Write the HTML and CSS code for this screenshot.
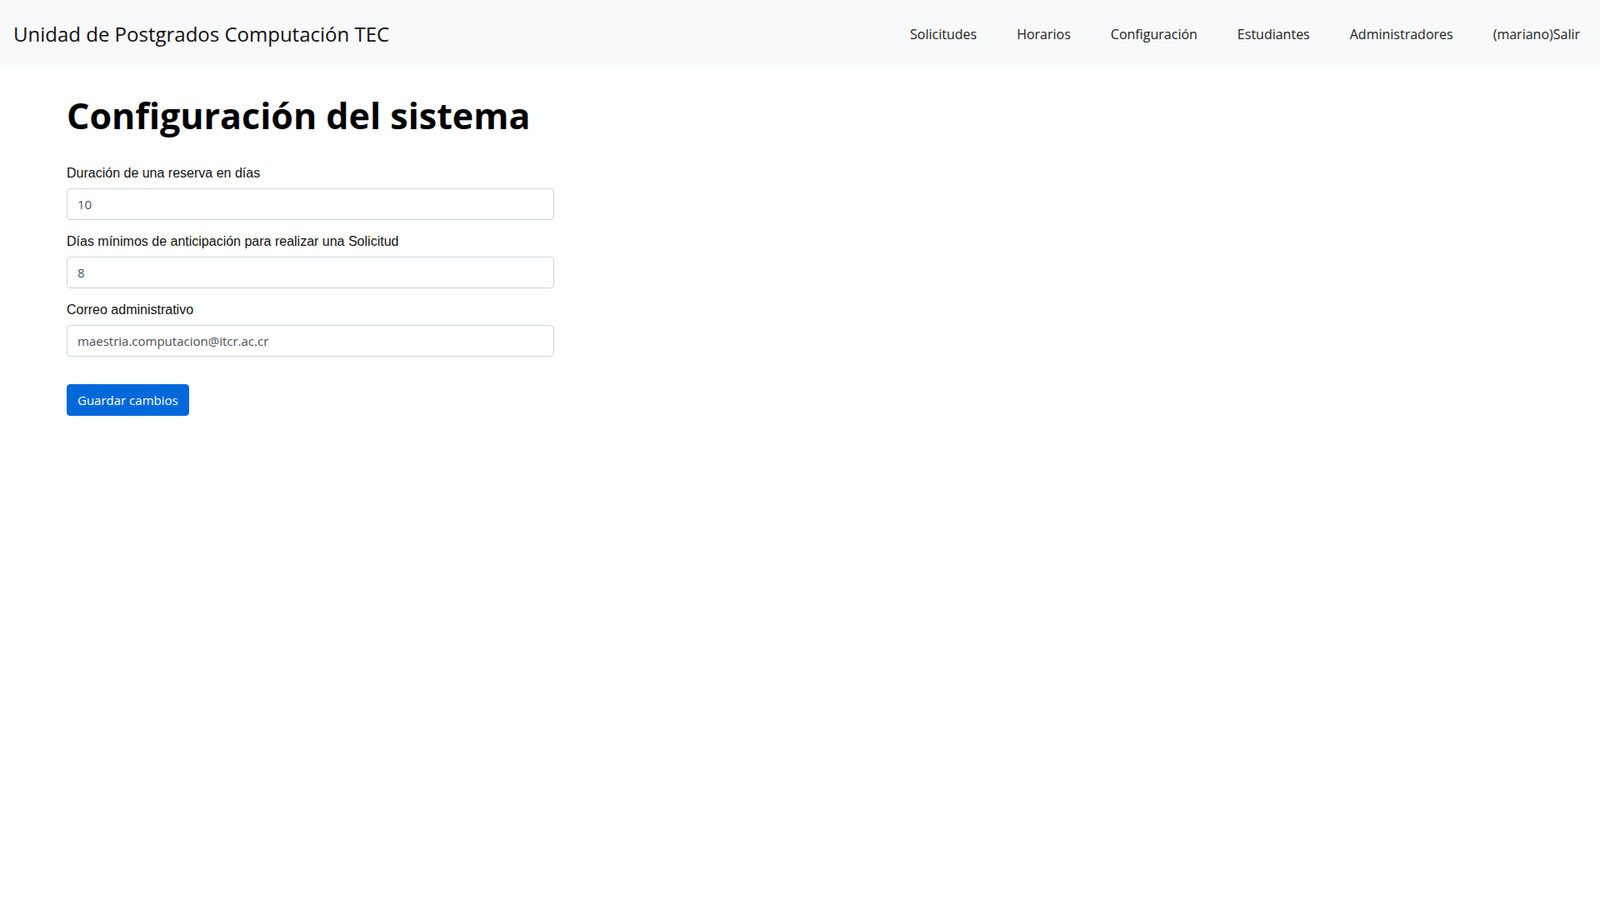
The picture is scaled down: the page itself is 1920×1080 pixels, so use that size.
FILE: index.html
```html
<!DOCTYPE html>
<html lang="es">
<head>
<meta charset="utf-8">
<title>Configuración del sistema</title>
<link rel="stylesheet" href="styles.css">
</head>
<body>
<nav class="navbar">
  <a class="brand" href="#">Unidad de Postgrados Computación TEC</a>
  <ul class="nav">
    <li><a class="nav-link" href="#">Solicitudes</a></li>
    <li><a class="nav-link" href="#">Horarios</a></li>
    <li><a class="nav-link" href="#">Configuración</a></li>
    <li><a class="nav-link" href="#">Estudiantes</a></li>
    <li><a class="nav-link" href="#">Administradores</a></li>
    <li><a class="nav-link" href="#">(mariano)Salir</a></li>
  </ul>
</nav>
<main class="page">
  <h1 class="title">Configuración del sistema</h1>
  <form class="form">
    <div class="form-group">
      <label class="label" for="dur">Duración de una reserva en días</label>
      <input class="control" id="dur" type="text" value="10">
    </div>
    <div class="form-group">
      <label class="label" for="min">Días mínimos de anticipación para realizar una Solicitud</label>
      <input class="control" id="min" type="text" value="8">
    </div>
    <div class="form-group">
      <label class="label" for="mail">Correo administrativo</label>
      <input class="control" id="mail" type="text" value="maestria.computacion@itcr.ac.cr">
    </div>
    <button class="btn" type="button">Guardar cambios</button>
  </form>
</main>
</body>
</html>
```

FILE: styles.css
```css
html, body {
  margin: 0;
  padding: 0;
  background: #ffffff;
}

body {
  font-family: "Open Sans", sans-serif;
  color: #212529;
}

.navbar {
  display: flex;
  align-items: center;
  justify-content: space-between;
  height: 81px;
  padding: 0 24px 0 16px;
  background: #f8f9fa;
  box-sizing: border-box;
}

.brand {
  font-size: 24px;
  line-height: 32px;
  color: #111;
  text-decoration: none;
}

.nav {
  display: flex;
  gap: 48px;
  list-style: none;
  margin: 0;
  padding: 0;
}

.nav-link {
  font-size: 16px;
  line-height: 24px;
  color: #222;
  text-decoration: none;
}

.page {
  padding: 32px 0 0 80px;
}

.title {
  margin: 0 0 33px;
  font-size: 43px;
  line-height: 1.2;
  font-weight: 700;
  color: #000;
}

.form {
  width: 585px;
}

.form-group {
  margin-bottom: 16px;
}

.label {
  display: block;
  margin-bottom: 8px;
  font-family: "Liberation Sans", Arial, sans-serif;
  font-size: 16px;
  line-height: 20px;
  color: #111;
}

.control {
  display: block;
  width: 100%;
  height: 38px;
  box-sizing: border-box;
  padding: 6px 12px;
  border: 1px solid #ced4da;
  border-radius: 4px;
  font-family: "Open Sans", sans-serif;
  font-size: 15px;
  line-height: 24px;
  color: #495057;
  background: #fff;
}

.btn {
  margin-top: 17px;
  height: 38px;
  padding: 6px 12px;
  border: 1px solid #0069d9;
  border-radius: 4px;
  background: #0069d9;
  color: #fff;
  font-family: "Open Sans", sans-serif;
  font-size: 15px;
  line-height: 24px;
  cursor: pointer;
}
```
